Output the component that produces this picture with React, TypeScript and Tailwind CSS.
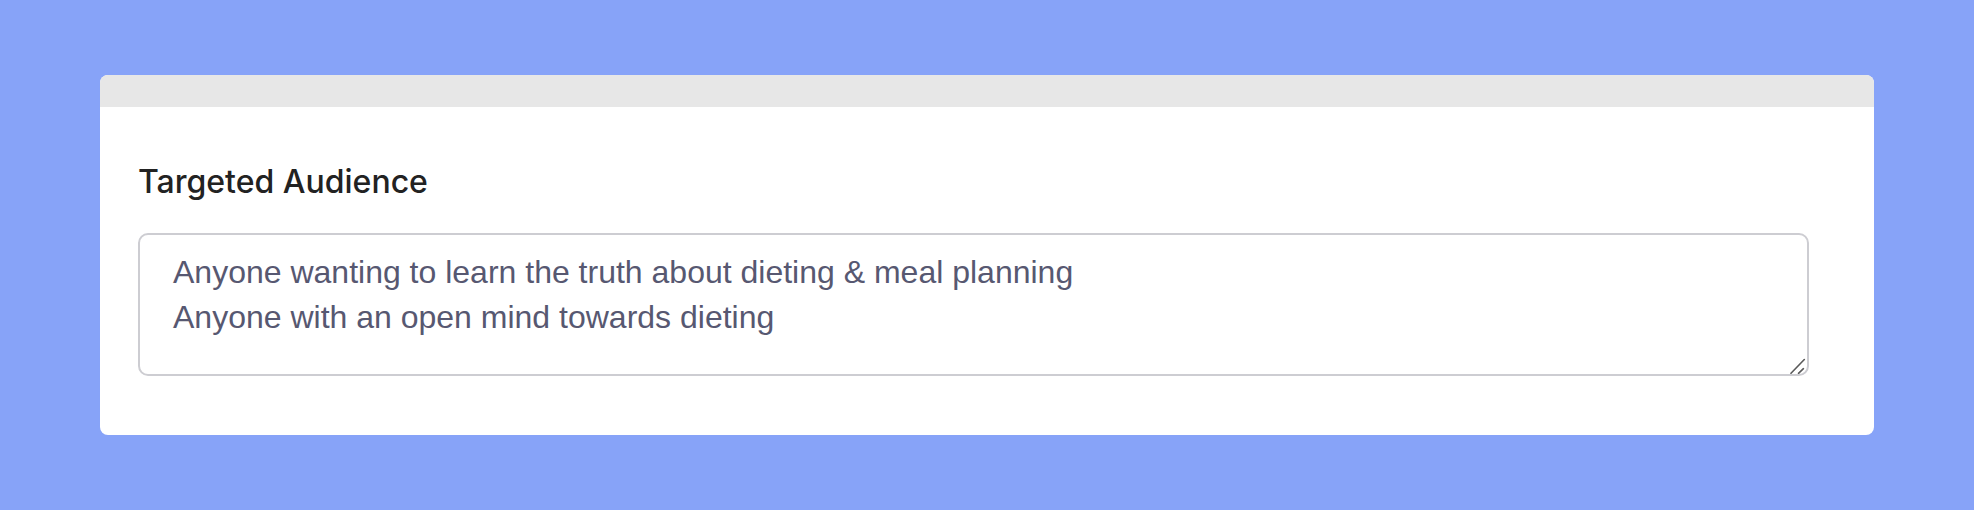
export default function App() {
  return (
    <div className="w-full h-[510px] bg-[#87a3f8] pt-[75px] px-[100px]">
      <div className="bg-white rounded-lg overflow-hidden h-[360px]">
        {/* top strip */}
        <div className="h-[32px] bg-[#e7e7e7]"></div>

        <div className="pl-[38px] pr-[65px] pt-[55px]">
          <label
            htmlFor="audience"
            className="block text-[32px] leading-[40px] font-medium text-[#222222] mb-[31px]"
            style={{ fontFamily: 'Inter, "Noto Sans", sans-serif' }}
          >
            Targeted Audience
          </label>
          <div className="relative">
            <textarea
              id="audience"
              className="block w-full h-[143px] border-2 border-[#cdcdd2] rounded-[10px] pl-[33px] pr-[22px] pt-[15px] text-[32px] leading-[45px] text-[#575871] bg-white outline-none resize-none"
              style={{ fontFamily: '"Liberation Sans", Arial, sans-serif' }}
              defaultValue={'Anyone wanting to learn the truth about dieting & meal planning\nAnyone with an open mind towards dieting'}
            />
            {/* resize grip */}
            <svg
              className="absolute right-[3px] bottom-[2px] pointer-events-none"
              width="16"
              height="16"
              viewBox="0 0 16 16"
            >
              <path d="M1 15.3L14.3 1.5" stroke="#5a5a5a" strokeWidth="1.6" strokeLinecap="round" />
              <path d="M8.5 15.3L13.4 10.7" stroke="#5a5a5a" strokeWidth="1.6" strokeLinecap="round" />
            </svg>
          </div>
        </div>
      </div>
    </div>
  );
}
